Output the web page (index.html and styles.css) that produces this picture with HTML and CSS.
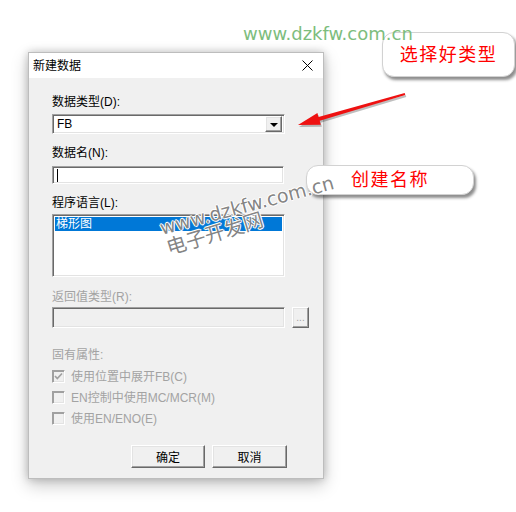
FILE: index.html
```html
<!DOCTYPE html>
<html>
<head>
<meta charset="utf-8">
<link rel="stylesheet" href="styles.css">
</head>
<body>
<div class="dialog">
  <div class="titlebar">
    <span class="title">新建数据</span>
    <svg class="close" width="11" height="11" viewBox="0 0 11 11"><path d="M0.5 0.5 L10.5 10.5 M10.5 0.5 L0.5 10.5" stroke="#000" stroke-width="1" fill="none"/></svg>
  </div>
  <div class="content">
    <div class="label first">数据类型(D):</div>
    <div class="combo">
      <span class="combo-text">FB</span>
      <span class="drop"><span class="tri"></span></span>
    </div>
    <div class="label gap11">数据名(N):</div>
    <div class="edit"><span class="caret"></span></div>
    <div class="label gap11">程序语言(L):</div>
    <div class="list">
      <div class="sel">梯形图</div>
    </div>
    <div class="label disabled gap12">返回值类型(R):</div>
    <div class="retrow">
      <div class="edit ret"></div>
      <div class="btn3d dots">...</div>
    </div>
    <div class="label disabled gap19">固有属性:</div>
    <div class="checks">
      <div class="check"><span class="box"><svg width="11" height="11" viewBox="0 0 11 11"><path d="M2 5 L4.3 7.5 L9 2.5" stroke="#a0a0a0" stroke-width="1.7" fill="none"/></svg></span><span class="ctext">使用位置中展开FB(C)</span></div>
      <div class="check"><span class="box"></span><span class="ctext">EN控制中使用MC/MCR(M)</span></div>
      <div class="check"><span class="box"></span><span class="ctext">使用EN/ENO(E)</span></div>
    </div>
    <div class="buttons">
      <div class="btn3d pb">确定</div>
      <div class="btn3d pb">取消</div>
    </div>
  </div>
</div>

<div class="callout c1">选择好类型</div>
<div class="callout c2">创建名称</div>

<svg class="arrow" width="516" height="512" viewBox="0 0 516 512">
  <polygon points="298,125 320.8,124.7 319.7,120.8 405.3,95 404.7,93 318.5,117 317.4,113.1" fill="rgba(0,0,0,0.25)" transform="translate(1,2)"/>
  <polygon points="298,125 320.8,124.7 319.7,120.8 405.3,95 404.7,93 318.5,117 317.4,113.1" fill="#ee1111"/>
</svg>

<div class="wm-green">www.dzkfw.com.cn</div>
<div class="wm-diag wm1">www.dzkfw.com.cn</div>
<div class="wm-diag wm2">电子开发网</div>
</body>
</html>
```

FILE: styles.css
```css
* { box-sizing: border-box; }
html, body { margin: 0; background: #fff; }
body {
  position: relative;
  width: 516px;
  height: 512px;
  overflow: hidden;
  padding: 52px 0 0 28px;
  font-family: "Liberation Sans", "Noto Sans CJK SC", sans-serif;
  font-size: 12px;
  color: #000;
}
.dialog {
  width: 296px;
  height: 427px;
  background: #f0f0f0;
  border: 1px solid #bdbdbd;
  box-shadow: 0 0 8px rgba(0,0,0,0.2), 0 6px 16px rgba(0,0,0,0.22);
  display: flex;
  flex-direction: column;
}
.titlebar {
  height: 25px;
  background: #fff;
  display: flex;
  align-items: center;
  justify-content: space-between;
  padding: 0 10px 0 4px;
}
.title { font-size: 12px; line-height: 16px; }
.close { display: block; }
.content {
  padding: 16px 0 0 23px;
  display: flex;
  flex-direction: column;
  align-items: flex-start;
}
.label { height: 16px; line-height: 16px; }
.gap11 { margin-top: 11px; }
.gap12 { margin-top: 12px; }
.gap19 { margin-top: 19px; }
.disabled { color: #a3a3a3; }

.combo, .edit, .list {
  border: 1px solid;
  border-color: #a0a0a0 #fff #fff #a0a0a0;
  box-shadow: inset 1px 1px #696969, inset -1px -1px #e3e3e3;
  background: #fff;
}
.combo {
  margin-top: 4px;
  width: 233px;
  height: 20px;
  display: flex;
  align-items: center;
  padding: 2px;
}
.combo-text { flex: 1; padding-left: 2px; font-size: 12px; line-height: 14px; }
.drop, .btn3d {
  background: #f0f0f0;
  border: 1px solid;
  border-color: #fff #696969 #696969 #fff;
  box-shadow: inset -1px -1px #a0a0a0, inset 1px 1px #e3e3e3;
}
.drop {
  width: 17px;
  height: 16px;
  display: flex;
  align-items: center;
  justify-content: center;
}
.tri {
  width: 0; height: 0;
  border-left: 4px solid transparent;
  border-right: 4px solid transparent;
  border-top: 4px solid #000;
  margin-top: 1px;
}
.edit {
  margin-top: 5px;
  width: 232px;
  height: 18px;
  padding: 2px 0 0 4px;
}
.caret { display: block; width: 1px; height: 13px; background: #000; }
.list {
  margin-top: 3px;
  width: 233px;
  height: 63px;
  padding: 2px;
}
.sel {
  height: 14px;
  line-height: 14px;
  background: #0078d7;
  color: #fff;
  padding-left: 1px;
}
.retrow {
  margin-top: 2px;
  display: flex;
  gap: 7px;
}
.edit.ret {
  margin-top: 0;
  width: 233px;
  height: 21px;
  background: #f0f0f0;
}
.dots {
  width: 17px;
  height: 21px;
  color: #a0a0a0;
  font-size: 10px;
  text-align: center;
  line-height: 19px;
}
.checks {
  margin-top: 3px;
  display: flex;
  flex-direction: column;
}
.check {
  height: 21px;
  display: flex;
  align-items: center;
  gap: 6px;
  color: #a3a3a3;
}
.box {
  width: 13px;
  height: 13px;
  border: 1px solid;
  border-color: #a0a0a0 #fff #fff #a0a0a0;
  box-shadow: inset 1px 1px #a0a0a0, inset -1px -1px #e3e3e3;
  background: #f0f0f0;
  display: flex;
  align-items: center;
  justify-content: center;
}
.box svg { display: block; }
.ctext { line-height: 16px; }
.buttons {
  margin-top: 16px;
  margin-left: 79px;
  display: flex;
  gap: 7px;
}
.pb {
  width: 74px;
  height: 23px;
  display: flex;
  align-items: center;
  justify-content: center;
  font-size: 12px;
}
.pb + .pb { width: 75px; }

.callout {
  position: absolute;
  background: #fff;
  border: 1px solid #d2d2d2;
  border-radius: 12px;
  box-shadow: 2px 3px 3px rgba(0,0,0,0.45);
  color: #ff0000;
  font-family: "Noto Sans CJK SC", sans-serif;
  font-size: 18px;
  letter-spacing: 1.5px;
  display: flex;
  align-items: center;
  justify-content: center;
}
.c1 { left: 382px; top: 32px; width: 133px; height: 45px; padding-bottom: 4px; }
.c2 { left: 306px; top: 165px; width: 168px; height: 30px; padding-bottom: 5px; }

.arrow { position: absolute; left: 0; top: 0; }

.wm-green {
  position: absolute;
  left: 243px;
  top: 24px;
  font-family: "DejaVu Sans", sans-serif;
  font-size: 18px;
  line-height: 20px;
  color: #7dbd7d;
}
.wm-diag {
  position: absolute;
  color: rgba(100,100,100,0.8);
  text-shadow: 0 0 2px #fff, 1px 0 0 #fff, -1px 0 0 #fff, 0 1px 0 #fff, 0 -1px 0 #fff;
  white-space: nowrap;
}
.wm1 {
  left: 162px;
  top: 219px;
  font-family: "DejaVu Sans", sans-serif;
  font-size: 19px;
  line-height: 19px;
  transform-origin: 0 16px;
  transform: rotate(-15deg);
}
.wm2 {
  left: 169px;
  top: 237px;
  font-family: "Noto Sans CJK SC", sans-serif;
  font-size: 20px;
  line-height: 20px;
  transform-origin: 0 18px;
  transform: rotate(-17deg);
}
```
